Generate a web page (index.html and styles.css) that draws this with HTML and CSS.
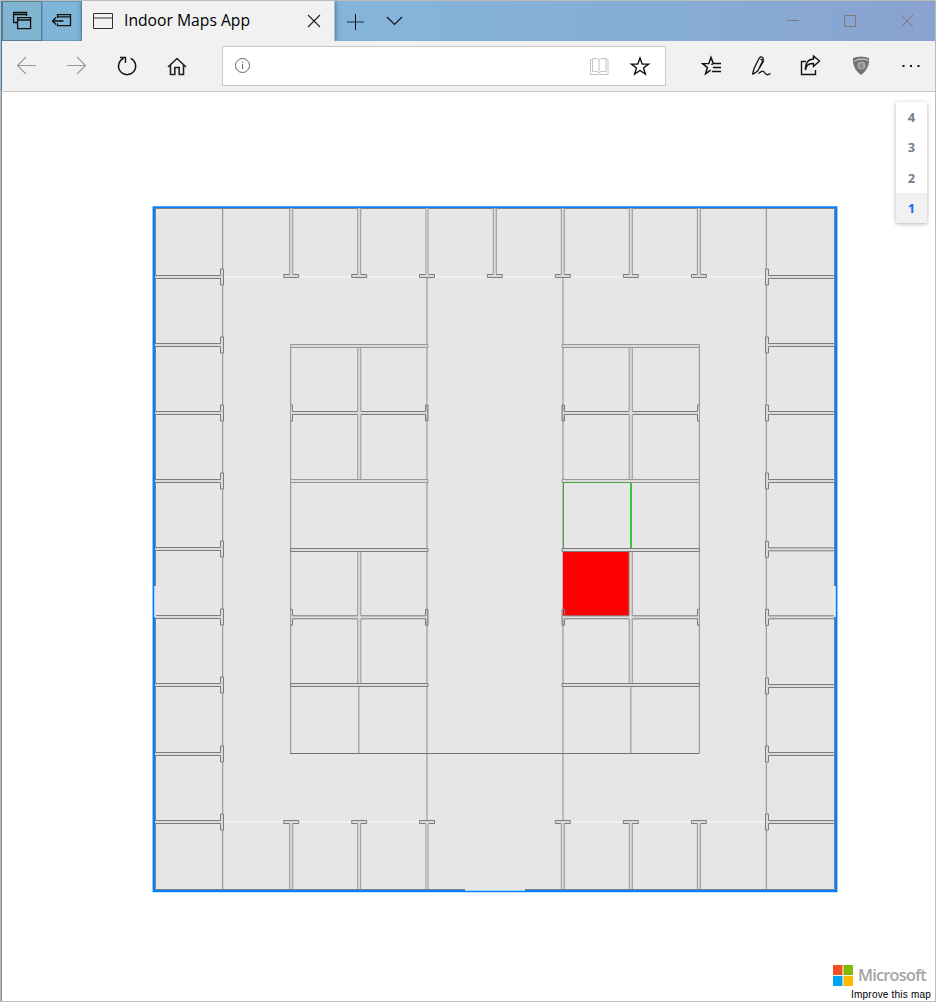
FILE: index.html
```html
<!DOCTYPE html>
<html lang="en">
<head>
<meta charset="utf-8">
<title>Indoor Maps App</title>
<link rel="stylesheet" href="styles.css">
</head>
<body>
<div class="window">
  <header class="titlebar">
    <button class="tab-tool tab-tool-active" aria-label="Tabs set aside"><svg width="38" height="38"><g fill="none" stroke="#111" stroke-width="1.3"><path d="M14.500 20.500h-3.900v-10h13v3.500M10.600 12.500h13"/><path d="M14.600 15.600h13v11h-13zM14.600 18h13"/></g></svg></button>
    <button class="tab-tool" aria-label="Set tabs aside"><svg width="38" height="38"><g fill="none" stroke="#111" stroke-width="1.300"><path d="M14.500 16v-3.400h13v11h-13v-2M14.500 14.900h13M9.500 19h11M13 15.500l-3.500 3.500 3.500 3.500"/></g></svg></button>
    <div class="tab">
      <svg width="21" height="17"><g fill="none" stroke="#333"><path d="M.5.5h19v15H.5zM.5 5h19"/></g></svg>
      <span class="tab-title">Indoor Maps App</span>
      <svg class="tab-close" width="14" height="14"><path d="M1 1l12 12M13 1L1 13" stroke="#222" stroke-width="1.100"/></svg>
    </div>
    <svg class="tab-actions" width="60" height="40"><g fill="none" stroke="#111"><path d="M12 21h17" stroke="#365c74" stroke-width="1.500"/><path d="M20.500 13v16"/><path d="M52 16l7.500 7.500L67 16" stroke-width="1.200"/></g></svg>
    <svg class="window-controls" width="160" height="40"><g fill="none" stroke="#807b78"><path d="M12 19.500h12M69.500 14.500h11v11h-11zM126 14l12 12M138 14l-12 12"/></g></svg>
  </header>
  <nav class="toolbar">
    <svg class="nav-icons" width="220" height="50"><g fill="none" stroke="#111">
      <path d="M34 24.500H16M24 16l-8.500 8.500 8.500 8.500M65 24.500h18M75 16l8.500 8.500-8.500 8.500" stroke="#999" stroke-width="1.100"/>
      <path d="M121.500 17.300a8.600 8.600 0 1 0 7.200 0M118 16.500h5.500V22" stroke-width="1.400"/>
      <path d="M166 26l9-8.500 9 8.500M168.500 24v9.500h4.300v-7h4.400v7h4.300V24" stroke="#222" stroke-width="1.600"/>
    </g></svg>
    <div class="address">
      <svg width="20" height="20"><circle cx="9.500" cy="9.500" r="7" fill="none" stroke="#666"/><path d="M9.500 8v5M9.500 5.500v1.300" stroke="#666"/></svg>
      <svg class="address-actions" width="62" height="24"><g fill="none" stroke="#c3c3c3"><path d="M3.500 5.500H1.500v15h17.500v-15h-2M10 6.500v11M3.500 4.500h5l1.500 1.500 1.500-1.500h5.500v13h-5L10 19l-1.500-1.500h-5z"/></g><path d="M51 4l2.200 6 6.400.1-5.100 3.900 1.900 6.100-5.400-3.600-5.400 3.600 1.900-6.100-5.100-3.900 6.400-.1z" fill="none" stroke="#111" stroke-width="1.400"/></svg>
    </div>
    <svg class="toolbar-actions" width="260" height="50"><g fill="none" stroke="#111" stroke-width="1.500">
      <path d="M52.500 22.500h-5.200L45 16.500l-2.200 6-6.200.1 4.800 4-1.800 6 5.100-3.500M46 24v-1.500M48 22.500h7M47 26.500h8M46 30.500h9"/>
      <path d="M86.500 33.500l1.500-6 5-10q1.500-2.500 3.300-1.300t.4 3.800l-5 10-5.200 3.500M94.500 18l3 2-4 7M92.500 32.500c3-2 4.500-3.500 6-1s3 3 6 1" stroke-width="1.300"/>
      <path d="M140 19.500h-4.500v13h14V28M139.500 28c1-5.500 3.500-6.500 8-6.500v3l6-5.500-6-5v3c-5 0-8.500 4-8 11z" transform="translate(0 1)" stroke-width="1.400"/>
    </g><path d="M187 17q8-3 16 0c.8 6-2 13-8 17-6-4-8.800-11-8-17z" fill="#737373"/><circle cx="195.500" cy="24.500" r="4" fill="#aaa"/><path d="M188 20.500c4-3 10-3 14.500-1" fill="none" stroke="#ddd"/><path d="M192.500 23.500l5.500 3M193 27l4.500-4M195.500 21.500v6" fill="none" stroke="#777" stroke-width=".8"/><path d="M236.500 24h2v2h-2zM244 24h2v2h-2zM251.500 24h2v2h-2z" fill="#111"/></svg>
  </nav>
  <main class="map">
    <svg class="floor" width="688" height="688" viewBox="151 205 688 688">
      <defs>
        <g id="top-wall"><path class="wall-fill" d="M-1.500-66H1.500V0H7.500V3H-7.500V0H-1.500z"/><path class="soft-wall" d="M-1.500-66V0M1.500-66V0"/><path class="wall" d="M-1.500 0H-7.500V3H7.500V0H1.500"/></g>
        <g id="bottom-wall"><path class="wall-fill" d="M-1.500 68.500H1.500V3H7.500V0H-7.500V3H-1.500z"/><path class="soft-wall" d="M-1.500 68.500V3M1.500 68.500V3"/><path class="wall" d="M-1.500 3H-7.500V0H7.500V3H1.500"/></g>
        <path id="left-wall" class="wall" d="M-66-1.500H-.5V-8H2.500V8H-.500V1.500H-66"/>
        <path id="right-wall" class="wall" d="M66-1.500H.500V-8H-2.500V8H.500V1.500H66"/>
        <path id="post" class="soft-wall" d="M-1.300 65V0M1.800 65V0"/>
        <g id="hooked-wall"><path class="wall-fill" d="M291-1.500H427V1.500H291z"/><path class="wall-line" d="M290.500-8H292.500V-1.500H357.500M361-1.500H425.500V-8H428V8H425.500V1.500H361M357.500 1.500H292.500V8H290.500"/></g>
        <path id="capped-wall" d="M290.500-1.500H428V1.500H290.500z"/>
      </defs>
      <path fill="#e6e6e6" d="M153 207h683v684H153z"/>
      <path fill="none" stroke="#8cc6ff" stroke-width="1" d="M152.500 206.500h685v685.500h-685z"/>
      <path fill="none" stroke="#0680ff" stroke-width="2" d="M154 207.500h682v683.500h-682z"/>
      <path fill="none" stroke="#7b8287" stroke-width="1" d="M155.500 208.500h679v681h-679z"/>
      <path stroke="#f5f5f5" stroke-width="1.700" d="M224 277h542M224 822h203M563 822h203"/>
      <g class="thin"><path d="M222.700 209v680M766.300 209v680M427 278v543M563 278v543M290.700 347v406M699.300 347v406M358.800 687v66M630.900 687v66"/><path d="M631.500 483v65"/></g>
      <g>
        <use href="#top-wall" x="291.200" y="274.500"/><use href="#top-wall" x="359.200" y="274.500"/><use href="#top-wall" x="427" y="274.500"/><use href="#top-wall" x="494.800" y="274.500"/><use href="#top-wall" x="562.800" y="274.500"/><use href="#top-wall" x="630.800" y="274.500"/><use href="#top-wall" x="698.900" y="274.500"/>
        <use href="#bottom-wall" x="291.200" y="820.500"/><use href="#bottom-wall" x="359.200" y="820.500"/><use href="#bottom-wall" x="427" y="820.500"/><use href="#bottom-wall" x="562.800" y="820.500"/><use href="#bottom-wall" x="630.800" y="820.500"/><use href="#bottom-wall" x="698.900" y="820.500"/>
        <path fill="#c1c1c1" d="M425 209h4v65h-4zM425 824h4v65h-4z"/>
      </g>
      <g>
        <use href="#left-wall" x="221" y="277"/><use href="#left-wall" x="221" y="345"/><use href="#left-wall" x="221" y="413"/><use href="#left-wall" x="221" y="481"/><use href="#left-wall" x="221" y="549"/><use href="#left-wall" x="221" y="617"/><use href="#left-wall" x="221" y="685"/><use href="#left-wall" x="221" y="754"/><use href="#left-wall" x="221" y="822"/>
        <use href="#right-wall" x="768" y="277"/><use href="#right-wall" x="768" y="345"/><use href="#right-wall" x="768" y="413"/><use href="#right-wall" x="768" y="481"/><use href="#right-wall" x="768" y="549.300"/><use href="#right-wall" x="768" y="617.300"/><use href="#right-wall" x="768" y="686"/><use href="#right-wall" x="768" y="754"/><use href="#right-wall" x="768" y="822"/>
      </g>
      <path class="occupied" d="M563 551h67v66h-67z"/>
      <g id="rooms">
        <path class="wall-fill" d="M358 347h3v133h-3zM358 551h3v133h-3z"/>
        <use href="#post" x="359" y="347.500"/><use href="#post" x="359" y="414.500"/><use href="#post" x="359" y="551.500"/><use href="#post" x="359" y="618.500"/>
        <use href="#capped-wall" class="soft-wall" y="346"/><use href="#hooked-wall" y="413"/><use href="#capped-wall" class="soft-wall" y="481"/><use href="#capped-wall" class="wall" y="550"/><use href="#hooked-wall" y="617.300"/><use href="#capped-wall" class="wall" y="685"/>
      </g>
      <use href="#rooms" transform="translate(990 0) scale(-1 1)"/>
      <path class="line" d="M290 753.500H699.500"/>
      <path class="selected" d="M563.500 548V482.500H630.500"/><path class="selected-side" d="M630.800 483v65"/>
      <path fill="#e6e6e6" d="M154 586h2v31h-2zM834 586h2v31h-2zM465 889h60v2h-60z"/><path stroke="#9fd0ff" d="M154.500 586v31M835.500 586v31M465 890.500h60"/><path stroke="#f6f6f6" d="M834.500 586v31"/>
    </svg>
    <ul class="levels"><li>4</li><li>3</li><li>2</li><li class="current">1</li></ul>
    <footer class="credits">
      <div class="brand"><svg width="20" height="21"><path fill="#f25022" d="M0 0h9.500v10H0z"/><path fill="#7fba00" d="M10.500 0H20v10h-9.500z"/><path fill="#00a4ef" d="M0 11h9.500v10H0z"/><path fill="#ffb900" d="M10.500 11H20v10h-9.500z"/></svg><span>Microsoft</span></div>
      <a class="improve">Improve this map</a>
    </footer>
  </main>
</div>
</body>
</html>
```
FILE: styles.css
```css
* { box-sizing: border-box; }
body { margin: 0; font-family: "Open Sans", "Noto Sans", sans-serif; }
svg { display: block; flex: none; overflow: visible; }
.window { width: 936px; height: 1002px; display: flex; flex-direction: column; border: 1px solid #bbb; overflow: hidden; background: #fff; }
.titlebar { height: 40px; display: flex; border-left: 1px solid #397da8; background: linear-gradient(90deg, #7cb8dc 0%, #86b3d9 45%, #86acd4 75%, #8aa2d1 100%); }
.tab-tool { width: 40px; height: 40px; padding: 0; border: 1px solid #699dbb; background: #7eb5d8; }
.tab-tool-active { border-color: #577e95; background: #80b4d0; }
.tab { width: 253px; height: 40px; padding: 0 13px 0 11px; display: flex; align-items: center; background: #f1f1f1; border-right: 1px solid #bbb; box-shadow: 0 0 5px #3d6784; }
.tab-title { margin-left: 10px; font-size: 15.700px; line-height: 36px; padding-bottom: 2px; color: #000; white-space: nowrap; }
.tab-close { margin-left: auto; }
.window-controls { margin-left: auto; }
.toolbar { height: 51px; display: flex; background: #f1f1f1; border-left: 1px solid #397da8; border-bottom: 1px solid #c8c8c8; }
.address { width: 444px; height: 40px; margin-top: 5px; padding: 0 14px 0 10px; display: flex; align-items: center; justify-content: space-between; background: #fff; border: 1px solid #c8c8c8; }
.map { flex: 1; position: relative; border-left: 1px solid #858c91; }
.floor { margin: 113px 0 0 149px; }
.wall { fill: #dadada; stroke: #7c7c7c; stroke-width: 1; }
.wall-line { fill: none; stroke: #7c7c7c; }
.soft-wall { fill: #dadada; stroke: #979797; }
.wall-fill { fill: #dadada; }
.thin { fill: none; stroke: #8b8b8b; stroke-width: 1; }
.line { fill: none; stroke: #707070; }
.occupied { fill: #f00; }
.selected { fill: none; stroke: #4ca64c; }
.selected-side { fill: none; stroke: #1ed21e; stroke-width: 1.500px; }
.levels { position: absolute; top: 10px; right: 8px; width: 31px; margin: 0; padding: 0; list-style: none; background: #fff; box-shadow: 0 1px 4px rgba(0,0,0,.3); font: bold 13px/30px "Noto Sans", sans-serif; color: #7c8084; text-align: center; }
.levels li { height: 30.250px; }
.levels .current { background: #f1f1f1; color: #1a6bff; }
.credits { position: absolute; right: 4px; bottom: -1px; display: flex; flex-direction: column; align-items: flex-end; }
.brand { display: flex; align-items: center; gap: 5px; margin: 0 5px 1px 0; color: #a5a5a5; font: 600 16.300px/22px "Open Sans", sans-serif; letter-spacing: -.75px; }
.improve { color: #000; font: 10px/15px "Liberation Sans", sans-serif; letter-spacing: .2px; }
```
